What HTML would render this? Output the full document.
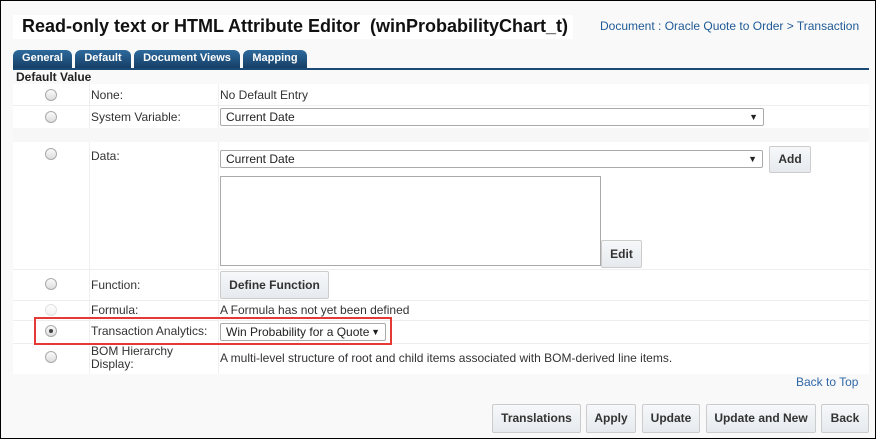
<!DOCTYPE html><html><head><style>
*{margin:0;padding:0;box-sizing:border-box}
body{width:876px;height:439px;overflow:hidden;font-family:"Liberation Sans",Arial,sans-serif;font-size:12px;color:#333;background:#fff}
.frame{position:absolute;left:0;top:0;width:876px;height:439px;border:1px solid #000;background:#f9f9f9}
.a{position:absolute;white-space:nowrap}
.radio{position:absolute;left:44px;width:12px;height:12px;border-radius:50%;border:1px solid #aaa;background:linear-gradient(#fafafa,#ddd)}
.lbl{position:absolute;left:90px;white-space:nowrap}
.sel{position:absolute;background:#fff;border:1px solid #aaa;border-radius:2px;padding:1px 5px;font-size:12px;color:#222;white-space:nowrap;line-height:15px}
.sel:after{content:"▼";position:absolute;right:5px;top:0px;font-size:9px;line-height:16px}
.btn{position:absolute;border:1px solid #ccc;border-radius:2px;background:linear-gradient(#f6f8fa,#e6eaee);font-weight:bold;color:#333;text-align:center;font-size:12px;white-space:nowrap}
.tab{position:absolute;top:49px;height:18px;background:linear-gradient(#2e6a9c,#153e66);color:#fff;font-weight:bold;font-size:11px;border-radius:6px 6px 0 0;text-align:center;line-height:17px}
</style></head><body><div class="frame">
<div class="a" style="left:12px;top:14px;width:560px;height:24px;background:#fff"></div>
<div class="a" style="left:21px;top:15px;font-size:18px;font-weight:bold;color:#111">Read-only text or HTML Attribute Editor&nbsp; (winProbabilityChart_t)</div>
<div class="a" style="left:599px;top:18px;font-size:12px;color:#1f5a96">Document : Oracle Quote to Order &gt; Transaction</div>
<div class="tab" style="left:12px;width:59px">General</div>
<div class="tab" style="left:74px;width:56px">Default</div>
<div class="tab" style="left:133px;width:106px">Document Views</div>
<div class="tab" style="left:242px;width:64px">Mapping</div>
<div class="a" style="left:12px;top:67px;width:856px;height:2px;background:#1b4a76"></div>
<div class="a" style="left:15px;top:69px;font-weight:bold;color:#222">Default Value</div>
<div class="a" style="left:12px;top:83px;width:856px;height:290px;background:#fff"></div>
<div class="a" style="left:88px;top:83px;width:1px;height:290px;background:#f0f0f0"></div>
<div class="a" style="left:217px;top:83px;width:1px;height:290px;background:#f0f0f0"></div>
<div class="a" style="left:12px;top:127px;width:856px;height:14px;background:#f7f7f7"></div>
<div class="a" style="left:12px;top:104px;width:856px;height:1px;background:#eee"></div>
<div class="a" style="left:12px;top:268px;width:856px;height:1px;background:#eee"></div>
<div class="a" style="left:12px;top:299px;width:856px;height:1px;background:#eee"></div>
<div class="a" style="left:12px;top:319px;width:856px;height:1px;background:#eee"></div>
<div class="a" style="left:12px;top:342px;width:856px;height:1px;background:#eee"></div>

<div class="radio" style="top:88px"></div><div class="lbl" style="top:87px">None:</div>
<div class="a" style="left:219px;top:87px">No Default Entry</div>
<div class="radio" style="top:110px"></div><div class="lbl" style="top:109px">System Variable:</div>
<div class="sel" style="left:219px;top:107px;width:544px;height:18px">Current Date</div>
<div class="radio" style="top:147px"></div><div class="lbl" style="top:148px">Data:</div>
<div class="sel" style="left:219px;top:149px;width:543px;height:18px">Current Date</div>
<div class="btn" style="left:768px;top:145px;width:42px;height:27px;line-height:25px">Add</div>
<div class="a" style="left:219px;top:175px;width:381px;height:90px;border:1px solid #aaa;background:#fff"></div>
<div class="btn" style="left:600px;top:239px;width:41px;height:28px;line-height:26px">Edit</div>
<div class="radio" style="top:277px"></div><div class="lbl" style="top:277px">Function:</div>
<div class="btn" style="left:219px;top:270px;width:109px;height:28px;line-height:26px">Define Function</div>
<div class="radio" style="top:303px;opacity:.35"></div><div class="lbl" style="top:302px">Formula:</div>
<div class="a" style="left:219px;top:302px">A Formula has not yet been defined</div>
<div class="a" style="left:33px;top:316px;width:358px;height:28px;border:2px solid #e53935"></div>
<div class="radio" style="top:324px"></div><div class="a" style="left:48px;top:328px;width:4px;height:4px;border-radius:50%;background:#444"></div>
<div class="lbl" style="top:323px">Transaction Analytics:</div>
<div class="sel" style="left:219px;top:322px;width:166px;height:18px;padding-right:16px">Win Probability for a Quote</div>
<div class="radio" style="top:350px"></div><div class="lbl" style="top:344px;line-height:13px">BOM Hierarchy<br>Display:</div>
<div class="a" style="left:219px;top:350px">A multi-level structure of root and child items associated with BOM-derived line items.</div>
<div class="a" style="left:795px;top:374px;color:#2f68a8">Back to Top</div>
<div class="btn" style="left:491px;top:403px;width:89px;height:29px;line-height:27px">Translations</div>
<div class="btn" style="left:585px;top:403px;width:50px;height:29px;line-height:27px">Apply</div>
<div class="btn" style="left:641px;top:403px;width:58px;height:29px;line-height:27px">Update</div>
<div class="btn" style="left:705px;top:403px;width:110px;height:29px;line-height:27px">Update and New</div>
<div class="btn" style="left:820px;top:403px;width:48px;height:29px;line-height:27px">Back</div>
</div></body></html>
